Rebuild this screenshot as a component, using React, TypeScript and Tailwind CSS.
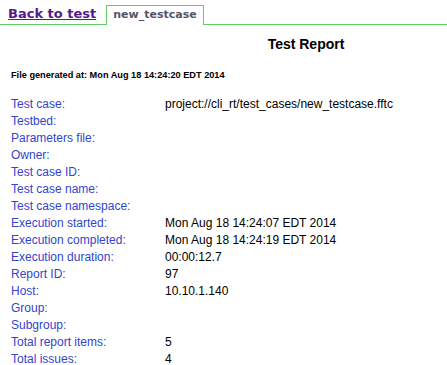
import React from "react";

const rows: [string, string][] = [
  ["Test case:", "project://cli_rt/test_cases/new_testcase.fftc"],
  ["Testbed:", ""],
  ["Parameters file:", ""],
  ["Owner:", ""],
  ["Test case ID:", ""],
  ["Test case name:", ""],
  ["Test case namespace:", ""],
  ["Execution started:", "Mon Aug 18 14:24:07 EDT 2014"],
  ["Execution completed:", "Mon Aug 18 14:24:19 EDT 2014"],
  ["Execution duration:", "00:00:12.7"],
  ["Report ID:", "97"],
  ["Host:", "10.10.1.140"],
  ["Group:", ""],
  ["Subgroup:", ""],
  ["Total report items:", "5"],
  ["Total issues:", "4"],
];

export default function App() {
  return (
    <div className="w-[447px] h-[365px] overflow-hidden bg-white font-['Liberation_Sans',Arial,sans-serif]">
      {/* tab strip */}
      <div className="flex items-end h-[25px] border-b border-[#66cc66] pl-[8px]">
        <a
          href="#"
          className="self-start mt-[6px] font-['DejaVu_Sans',Verdana,sans-serif] font-bold text-[13px] leading-[16px] text-[#551a8b] underline"
        >
          Back to test
        </a>
        <div className="ml-[10px] -mb-px h-[20px] border border-b-0 border-[#66cc66] bg-white px-[6px] font-['DejaVu_Sans',Verdana,sans-serif] font-bold text-[11px] leading-[18px] text-[#555566]">
          new_testcase
        </div>
      </div>

      {/* header */}
      <div className="mt-[11px] pl-[165px] text-center text-[14px] leading-[16px] font-bold text-black">
        Test Report
      </div>
      <div className="mt-[17px] pl-[11px] text-[9.2px] leading-[12px] font-bold text-black">
        File generated at: Mon Aug 18 14:24:20 EDT 2014
      </div>

      {/* details */}
      <div className="mt-[15px] pl-[11px] grid grid-cols-[154px_1fr] text-[12px] leading-[17px]">
        {rows.map(([label, value]) => (
          <React.Fragment key={label}>
            <div className="text-[#3344cc]">{label}</div>
            <div className="text-black">{value}</div>
          </React.Fragment>
        ))}
      </div>
    </div>
  );
}
